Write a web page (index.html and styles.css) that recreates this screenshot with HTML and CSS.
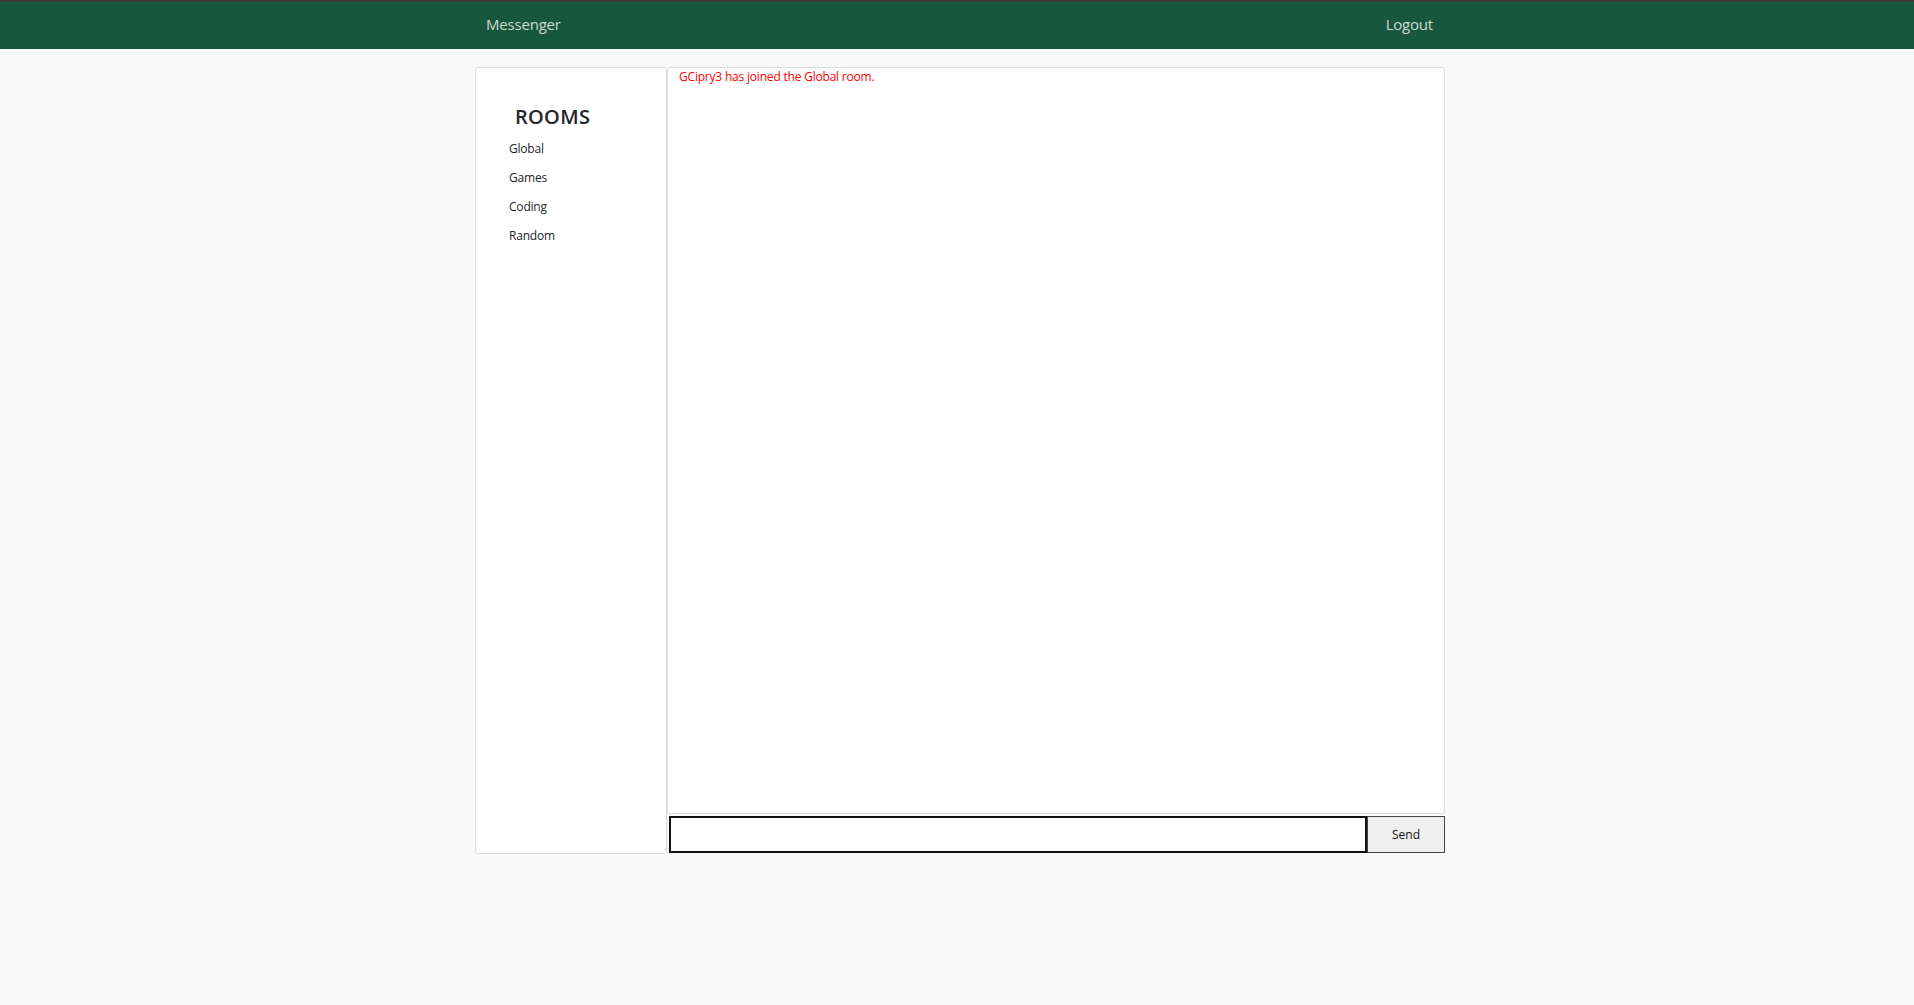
FILE: index.html
```html
<!DOCTYPE html>
<html>
<head>
<meta charset="utf-8">
<title>Messenger</title>
<link rel="stylesheet" href="styles.css">
</head>
<body>
<nav class="navbar">
  <div class="nav-inner">
    <a class="brand" href="#">Messenger</a>
    <a class="logout" href="#">Logout</a>
  </div>
</nav>
<main class="wrapper">
  <aside class="sidebar">
    <h2 class="rooms-title">ROOMS</h2>
    <ul class="room-list">
      <li>Global</li>
      <li>Games</li>
      <li>Coding</li>
      <li>Random</li>
    </ul>
  </aside>
  <section class="chat">
    <div class="messages">
      <p class="system-msg">GCipry3 has joined the Global room.</p>
    </div>
    <form class="composer">
      <input class="msg-input" type="text">
      <button class="send-btn" type="button">Send</button>
    </form>
  </section>
</main>
</body>
</html>
```
FILE: styles.css
```css
html, body {
  margin: 0;
  padding: 0;
}
body {
  background: #f9f9f9;
  font-family: "Open Sans", "Noto Sans", sans-serif;
  color: #212529;
}
.navbar {
  background: #17573d;
  border-top: 2px solid #3a3a3a;
  height: 47px;
}
.nav-inner {
  width: 958px;
  margin-left: calc(50% - 471px);
  height: 100%;
  box-sizing: border-box;
  padding-bottom: 4px;
  display: flex;
  align-items: center;
  justify-content: space-between;
}
.brand, .logout {
  color: #cfd9d4;
  text-decoration: none;
  font-size: 15px;
  letter-spacing: -0.2px;
}
.logout {
  margin-right: 11px;
}
.wrapper {
  width: 970px;
  margin: 18px 0 0 calc(50% - 482px);
  display: flex;
}
.sidebar {
  width: 190px;
  height: 785px;
  background: #fff;
  border: 1px solid #dcdcdc;
  border-radius: 3px;
}
.rooms-title {
  margin: 37px 0 0 39px;
  font-size: 20px;
  font-weight: 600;
  line-height: 24px;
  letter-spacing: 0.3px;
}
.room-list {
  list-style: none;
  margin: 5px 0 0 33px;
  padding: 0;
}
.room-list li {
  font-size: 12px;
  line-height: 29px;
  height: 29px;
  letter-spacing: -0.2px;
  color: #212529;
}
.chat {
  flex: 1;
  display: flex;
  flex-direction: column;
}
.messages {
  height: 745px;
  background: #fff;
  border: 1px solid #dcdcdc;
  border-radius: 3px;
  padding: 0 10px;
}
.system-msg {
  margin: 0 0 0 1px;
  font-size: 12px;
  line-height: 18px;
  color: #ff0000;
  letter-spacing: -0.2px;
}
.composer {
  display: flex;
  margin: 2px 0 0 2px;
  height: 37px;
}
.msg-input {
  flex: 1;
  box-sizing: border-box;
  height: 37px;
  border: 2px solid #111;
  background: #fff;
  margin: 0;
  outline: none;
}
.send-btn {
  width: 78px;
  height: 37px;
  box-sizing: border-box;
  margin: 0;
  background: #efefef;
  border: 1px solid #444;
  font-family: "Open Sans", sans-serif;
  font-size: 12px;
  color: #111;
}
```
